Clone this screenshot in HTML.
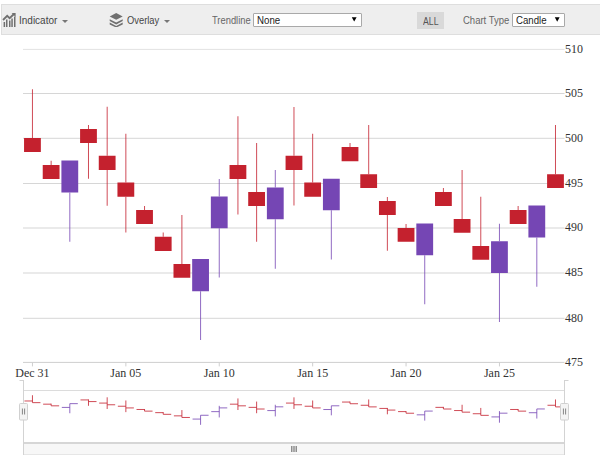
<!DOCTYPE html>
<html><head><meta charset="utf-8"><style>
html,body{margin:0;padding:0;background:#fff;width:600px;height:462px;overflow:hidden;position:relative}
*{box-sizing:border-box}
#tb{position:absolute;left:1px;top:4px;width:620px;height:31px;background:#eeeeee;border:1px solid #dedede;border-right:none}
.t{position:absolute;font-family:"Liberation Sans",sans-serif;font-size:10px;line-height:10px;white-space:nowrap}
.caret{position:absolute;width:0;height:0;border-left:3px solid transparent;border-right:3px solid transparent;border-top:3.3px solid #777}
.sel{position:absolute;background:#fff;border:1px solid #a9a9a9;border-radius:1px}
.arr{position:absolute;width:0;height:0;border-left:2.5px solid transparent;border-right:2.5px solid transparent;border-top:4.6px solid #000}
svg text{font-family:"Liberation Serif",serif;font-size:12px;fill:#333}
.xl{text-anchor:middle}
.yl{font-size:13px}
</style></head><body>
<div id="tb"></div>
<svg width="16" height="16" viewBox="0 0 16 16" style="position:absolute;left:1px;top:11px">
<g fill="#707070">
<rect x="2.6" y="11" width="1.5" height="5.5"/>
<rect x="5" y="8.5" width="1.5" height="8"/>
<rect x="8" y="9.5" width="1.5" height="7"/>
<rect x="10.3" y="7.5" width="1.5" height="9"/>
<rect x="13" y="5.5" width="1.5" height="11"/>
</g>
<polyline points="2,9 6.2,4.8 8.6,7.2 13,3" fill="none" stroke="#707070" stroke-width="1.8"/>
<polygon points="10.6,2 14.6,2 14.6,6" fill="#707070"/>
</svg>
<div class="t" style="left:19px;top:16px;color:#454545">Indicator</div>
<div class="caret" style="left:62px;top:20px"></div>
<svg width="16" height="16" viewBox="0 0 16 16" style="position:absolute;left:107px;top:11px">
<g fill="#707070">
<polygon points="2.7,5.5 9.2,2 15.7,5.5 9.2,8.7"/>
<polygon points="2.7,8.3 9.2,11.6 15.7,8.3 15.7,10.1 9.2,13.4 2.7,10.1"/>
<polygon points="2.7,11.6 9.2,15 15.7,11.6 15.7,13.4 9.2,16.6 2.7,13.4"/>
</g>
</svg>
<div class="t" style="left:127px;top:16px;color:#454545;transform:scaleX(0.935);transform-origin:0 0">Overlay</div>
<div class="caret" style="left:164px;top:20px"></div>
<div class="t" style="left:211.5px;top:16px;color:#666;transform:scaleX(0.935);transform-origin:0 0">Trendline</div>
<div class="sel" style="left:253px;top:13px;width:109px;height:14px"></div>
<div class="t" style="left:257.3px;top:16px;color:#222;transform:scaleX(0.97);transform-origin:0 0">None</div>
<svg width="8" height="8" style="position:absolute;left:351px;top:16px"><polygon points="0.8,1.2 5.6,1.2 3.2,5.6" fill="#000"/></svg>
<div style="position:absolute;left:417px;top:12px;width:27px;height:17px;background:#d9d9d9"></div>
<div class="t" style="left:423px;top:16.5px;color:#555;transform:scaleX(0.87);transform-origin:0 0">ALL</div>
<div class="t" style="left:463px;top:16px;color:#666;transform:scaleX(0.95);transform-origin:0 0">Chart Type</div>
<div class="sel" style="left:512px;top:13px;width:53px;height:14px"></div>
<div class="t" style="left:516px;top:16px;color:#222;transform:scaleX(0.965);transform-origin:0 0">Candle</div>
<svg width="8" height="8" style="position:absolute;left:554px;top:16px"><polygon points="0.8,1.3 5.6,1.3 3.2,5.8" fill="#000"/></svg>
<svg width="600" height="462" style="position:absolute;left:0;top:0">
<rect x="23" y="48.9" width="541.5" height="1" fill="#e3e3e3"/><rect x="23" y="93" width="541.5" height="1" fill="#d6d6d6"/><rect x="23" y="137.8" width="541.5" height="1" fill="#d6d6d6"/><rect x="23" y="183" width="541.5" height="1" fill="#d6d6d6"/><rect x="23" y="227.5" width="541.5" height="1" fill="#d6d6d6"/><rect x="23" y="272.5" width="541.5" height="1" fill="#d6d6d6"/><rect x="23" y="317.8" width="541.5" height="1" fill="#d6d6d6"/><rect x="23" y="361.9" width="541.5" height="1" fill="#cfcfcf"/><text transform="translate(565 52.7) scale(0.92 1)" class="yl">510</text><text transform="translate(565 96.8) scale(0.92 1)" class="yl">505</text><text transform="translate(565 141.6) scale(0.92 1)" class="yl">500</text><text transform="translate(565 186.8) scale(0.92 1)" class="yl">495</text><text transform="translate(565 231.3) scale(0.92 1)" class="yl">490</text><text transform="translate(565 276.3) scale(0.92 1)" class="yl">485</text><text transform="translate(565 321.6) scale(0.92 1)" class="yl">480</text><text transform="translate(565 365.7) scale(0.92 1)" class="yl">475</text><rect x="31.95" y="362.4" width="1" height="4" fill="#cfcfcf"/><text x="32.45" y="377" class="xl">Dec 31</text><rect x="125.35" y="362.4" width="1" height="4" fill="#cfcfcf"/><text x="125.85" y="377" class="xl">Jan 05</text><rect x="218.75" y="362.4" width="1" height="4" fill="#cfcfcf"/><text x="219.25" y="377" class="xl">Jan 10</text><rect x="312.15" y="362.4" width="1" height="4" fill="#cfcfcf"/><text x="312.65" y="377" class="xl">Jan 15</text><rect x="405.55" y="362.4" width="1" height="4" fill="#cfcfcf"/><text x="406.05" y="377" class="xl">Jan 20</text><rect x="498.95" y="362.4" width="1" height="4" fill="#cfcfcf"/><text x="499.45" y="377" class="xl">Jan 25</text><rect x="31.95" y="89.25" width="1" height="48.75" fill="#c4212e" fill-opacity="0.8"/><rect x="24.05" y="138" width="16.8" height="14" fill="#c4212e"/><rect x="50.63" y="160.75" width="1" height="4.25" fill="#c4212e" fill-opacity="0.8"/><rect x="42.73" y="165" width="16.8" height="14" fill="#c4212e"/><rect x="69.31" y="192.5" width="1" height="49.25" fill="#7546b4" fill-opacity="0.8"/><rect x="61.41" y="160.5" width="16.8" height="32" fill="#7546b4"/><rect x="87.99" y="125" width="1" height="4" fill="#c4212e" fill-opacity="0.8"/><rect x="87.99" y="143" width="1" height="35.75" fill="#c4212e" fill-opacity="0.8"/><rect x="80.09" y="129" width="16.8" height="14" fill="#c4212e"/><rect x="106.67" y="106.75" width="1" height="49" fill="#c4212e" fill-opacity="0.8"/><rect x="106.67" y="170" width="1" height="35.75" fill="#c4212e" fill-opacity="0.8"/><rect x="98.77" y="155.75" width="16.8" height="14.25" fill="#c4212e"/><rect x="125.35" y="133.75" width="1" height="48.75" fill="#c4212e" fill-opacity="0.8"/><rect x="125.35" y="196.75" width="1" height="35.75" fill="#c4212e" fill-opacity="0.8"/><rect x="117.45" y="182.5" width="16.8" height="14.25" fill="#c4212e"/><rect x="144.03" y="206" width="1" height="4" fill="#c4212e" fill-opacity="0.8"/><rect x="136.13" y="210" width="16.8" height="14" fill="#c4212e"/><rect x="162.71" y="232.5" width="1" height="4.25" fill="#c4212e" fill-opacity="0.8"/><rect x="154.81" y="236.75" width="16.8" height="14.25" fill="#c4212e"/><rect x="181.39" y="215" width="1" height="49" fill="#c4212e" fill-opacity="0.8"/><rect x="173.49" y="264" width="16.8" height="13.75" fill="#c4212e"/><rect x="200.07" y="291.25" width="1" height="48.75" fill="#7546b4" fill-opacity="0.8"/><rect x="192.17" y="259" width="16.8" height="32.25" fill="#7546b4"/><rect x="218.75" y="179" width="1" height="17.5" fill="#7546b4" fill-opacity="0.8"/><rect x="218.75" y="228.25" width="1" height="49.25" fill="#7546b4" fill-opacity="0.8"/><rect x="210.85" y="196.5" width="16.8" height="31.75" fill="#7546b4"/><rect x="237.43" y="116.25" width="1" height="48.75" fill="#c4212e" fill-opacity="0.8"/><rect x="237.43" y="179" width="1" height="35.5" fill="#c4212e" fill-opacity="0.8"/><rect x="229.53" y="165" width="16.8" height="14" fill="#c4212e"/><rect x="256.11" y="143" width="1" height="49" fill="#c4212e" fill-opacity="0.8"/><rect x="256.11" y="206" width="1" height="35.75" fill="#c4212e" fill-opacity="0.8"/><rect x="248.21" y="192" width="16.8" height="14" fill="#c4212e"/><rect x="274.79" y="170" width="1" height="17.5" fill="#7546b4" fill-opacity="0.8"/><rect x="274.79" y="219.25" width="1" height="49.5" fill="#7546b4" fill-opacity="0.8"/><rect x="266.89" y="187.5" width="16.8" height="31.75" fill="#7546b4"/><rect x="293.47" y="107" width="1" height="48.75" fill="#c4212e" fill-opacity="0.8"/><rect x="293.47" y="170" width="1" height="35.5" fill="#c4212e" fill-opacity="0.8"/><rect x="285.57" y="155.75" width="16.8" height="14.25" fill="#c4212e"/><rect x="312.15" y="133.75" width="1" height="48.75" fill="#c4212e" fill-opacity="0.8"/><rect x="304.25" y="182.5" width="16.8" height="14.25" fill="#c4212e"/><rect x="330.83" y="210.25" width="1" height="49.25" fill="#7546b4" fill-opacity="0.8"/><rect x="322.93" y="178.75" width="16.8" height="31.5" fill="#7546b4"/><rect x="349.51" y="143" width="1" height="4" fill="#c4212e" fill-opacity="0.8"/><rect x="341.61" y="147" width="16.8" height="14.25" fill="#c4212e"/><rect x="368.19" y="125" width="1" height="49.25" fill="#c4212e" fill-opacity="0.8"/><rect x="360.29" y="174.25" width="16.8" height="13.75" fill="#c4212e"/><rect x="386.87" y="197" width="1" height="4" fill="#c4212e" fill-opacity="0.8"/><rect x="386.87" y="215" width="1" height="35.75" fill="#c4212e" fill-opacity="0.8"/><rect x="378.97" y="201" width="16.8" height="14" fill="#c4212e"/><rect x="405.55" y="224" width="1" height="4" fill="#c4212e" fill-opacity="0.8"/><rect x="397.65" y="228" width="16.8" height="13.75" fill="#c4212e"/><rect x="424.23" y="255.25" width="1" height="49" fill="#7546b4" fill-opacity="0.8"/><rect x="416.33" y="223.5" width="16.8" height="31.75" fill="#7546b4"/><rect x="442.91" y="188" width="1" height="4" fill="#c4212e" fill-opacity="0.8"/><rect x="435.01" y="192" width="16.8" height="14" fill="#c4212e"/><rect x="461.59" y="170" width="1" height="49" fill="#c4212e" fill-opacity="0.8"/><rect x="453.69" y="219" width="16.8" height="13.75" fill="#c4212e"/><rect x="480.27" y="196.75" width="1" height="49.25" fill="#c4212e" fill-opacity="0.8"/><rect x="472.37" y="246" width="16.8" height="13.75" fill="#c4212e"/><rect x="498.95" y="223.75" width="1" height="17.5" fill="#7546b4" fill-opacity="0.8"/><rect x="498.95" y="273" width="1" height="49" fill="#7546b4" fill-opacity="0.8"/><rect x="491.05" y="241.25" width="16.8" height="31.75" fill="#7546b4"/><rect x="517.63" y="206" width="1" height="4" fill="#c4212e" fill-opacity="0.8"/><rect x="509.73" y="210" width="16.8" height="14" fill="#c4212e"/><rect x="536.31" y="237.5" width="1" height="49.25" fill="#7546b4" fill-opacity="0.8"/><rect x="528.41" y="205.5" width="16.8" height="32" fill="#7546b4"/><rect x="554.99" y="125" width="1" height="49.25" fill="#c4212e" fill-opacity="0.8"/><rect x="547.09" y="174.25" width="16.8" height="13.75" fill="#c4212e"/>
<rect x="23" y="380" width="1" height="75" fill="#d3d3d3"/><rect x="564" y="380" width="1" height="75" fill="#d3d3d3"/><rect x="19.5" y="380" width="4" height="1" fill="#d3d3d3"/><rect x="564" y="380" width="4.5" height="1" fill="#d3d3d3"/><rect x="24" y="390" width="540" height="1" fill="#dcdcdc"/><rect x="24" y="444" width="540" height="10" fill="#f7f7f7"/><rect x="24" y="442" width="540" height="2" fill="#d6d6d6"/><rect x="24" y="454" width="540" height="1" fill="#e6e6e6"/><rect x="291" y="446" width="6" height="6" fill="#c4c4c4"/><rect x="291" y="446" width="1" height="6" fill="#8f8f8f"/><rect x="293.5" y="446" width="1" height="6" fill="#8f8f8f"/><rect x="296" y="446" width="1" height="6" fill="#8f8f8f"/><rect x="31.95" y="395.23" width="1" height="7.4" fill="#c4212e" fill-opacity="0.8"/><rect x="24.45" y="400.48" width="8" height="1" fill="#c4212e" fill-opacity="0.8"/><rect x="32.45" y="402.14" width="8" height="1" fill="#c4212e" fill-opacity="0.8"/><rect x="50.63" y="403.67" width="1" height="2.15" fill="#c4212e" fill-opacity="0.8"/><rect x="43.13" y="403.67" width="8" height="1" fill="#c4212e" fill-opacity="0.8"/><rect x="51.13" y="405.32" width="8" height="1" fill="#c4212e" fill-opacity="0.8"/><rect x="69.31" y="403.64" width="1" height="9.59" fill="#7546b4" fill-opacity="0.8"/><rect x="61.81" y="406.91" width="8" height="1" fill="#7546b4" fill-opacity="0.8"/><rect x="69.81" y="403.14" width="8" height="1" fill="#7546b4" fill-opacity="0.8"/><rect x="87.99" y="399.45" width="1" height="6.34" fill="#c4212e" fill-opacity="0.8"/><rect x="80.49" y="399.42" width="8" height="1" fill="#c4212e" fill-opacity="0.8"/><rect x="88.49" y="401.07" width="8" height="1" fill="#c4212e" fill-opacity="0.8"/><rect x="106.67" y="397.3" width="1" height="11.68" fill="#c4212e" fill-opacity="0.8"/><rect x="99.17" y="402.58" width="8" height="1" fill="#c4212e" fill-opacity="0.8"/><rect x="107.17" y="404.26" width="8" height="1" fill="#c4212e" fill-opacity="0.8"/><rect x="125.35" y="400.48" width="1" height="11.65" fill="#c4212e" fill-opacity="0.8"/><rect x="117.85" y="405.74" width="8" height="1" fill="#c4212e" fill-opacity="0.8"/><rect x="125.85" y="407.42" width="8" height="1" fill="#c4212e" fill-opacity="0.8"/><rect x="144.03" y="409.01" width="1" height="2.12" fill="#c4212e" fill-opacity="0.8"/><rect x="136.53" y="408.98" width="8" height="1" fill="#c4212e" fill-opacity="0.8"/><rect x="144.53" y="410.63" width="8" height="1" fill="#c4212e" fill-opacity="0.8"/><rect x="162.71" y="412.13" width="1" height="2.18" fill="#c4212e" fill-opacity="0.8"/><rect x="155.21" y="412.14" width="8" height="1" fill="#c4212e" fill-opacity="0.8"/><rect x="163.21" y="413.82" width="8" height="1" fill="#c4212e" fill-opacity="0.8"/><rect x="181.39" y="410.07" width="1" height="7.4" fill="#c4212e" fill-opacity="0.8"/><rect x="173.89" y="415.35" width="8" height="1" fill="#c4212e" fill-opacity="0.8"/><rect x="181.89" y="416.97" width="8" height="1" fill="#c4212e" fill-opacity="0.8"/><rect x="200.07" y="415.26" width="1" height="9.56" fill="#7546b4" fill-opacity="0.8"/><rect x="192.57" y="418.57" width="8" height="1" fill="#7546b4" fill-opacity="0.8"/><rect x="200.57" y="414.76" width="8" height="1" fill="#7546b4" fill-opacity="0.8"/><rect x="218.75" y="405.82" width="1" height="11.62" fill="#7546b4" fill-opacity="0.8"/><rect x="211.25" y="411.13" width="8" height="1" fill="#7546b4" fill-opacity="0.8"/><rect x="219.25" y="407.39" width="8" height="1" fill="#7546b4" fill-opacity="0.8"/><rect x="237.43" y="398.42" width="1" height="11.59" fill="#c4212e" fill-opacity="0.8"/><rect x="229.93" y="403.67" width="8" height="1" fill="#c4212e" fill-opacity="0.8"/><rect x="237.93" y="405.32" width="8" height="1" fill="#c4212e" fill-opacity="0.8"/><rect x="256.11" y="401.57" width="1" height="11.65" fill="#c4212e" fill-opacity="0.8"/><rect x="248.61" y="406.86" width="8" height="1" fill="#c4212e" fill-opacity="0.8"/><rect x="256.61" y="408.51" width="8" height="1" fill="#c4212e" fill-opacity="0.8"/><rect x="274.79" y="404.76" width="1" height="11.65" fill="#7546b4" fill-opacity="0.8"/><rect x="267.29" y="410.07" width="8" height="1" fill="#7546b4" fill-opacity="0.8"/><rect x="275.29" y="406.32" width="8" height="1" fill="#7546b4" fill-opacity="0.8"/><rect x="293.47" y="397.33" width="1" height="11.62" fill="#c4212e" fill-opacity="0.8"/><rect x="285.97" y="402.58" width="8" height="1" fill="#c4212e" fill-opacity="0.8"/><rect x="293.97" y="404.26" width="8" height="1" fill="#c4212e" fill-opacity="0.8"/><rect x="312.15" y="400.48" width="1" height="7.43" fill="#c4212e" fill-opacity="0.8"/><rect x="304.65" y="405.74" width="8" height="1" fill="#c4212e" fill-opacity="0.8"/><rect x="312.65" y="407.42" width="8" height="1" fill="#c4212e" fill-opacity="0.8"/><rect x="330.83" y="405.79" width="1" height="9.53" fill="#7546b4" fill-opacity="0.8"/><rect x="323.33" y="409.01" width="8" height="1" fill="#7546b4" fill-opacity="0.8"/><rect x="331.33" y="405.29" width="8" height="1" fill="#7546b4" fill-opacity="0.8"/><rect x="349.51" y="401.57" width="1" height="2.15" fill="#c4212e" fill-opacity="0.8"/><rect x="342.01" y="401.55" width="8" height="1" fill="#c4212e" fill-opacity="0.8"/><rect x="350.01" y="403.23" width="8" height="1" fill="#c4212e" fill-opacity="0.8"/><rect x="368.19" y="399.45" width="1" height="7.43" fill="#c4212e" fill-opacity="0.8"/><rect x="360.69" y="404.76" width="8" height="1" fill="#c4212e" fill-opacity="0.8"/><rect x="368.69" y="406.38" width="8" height="1" fill="#c4212e" fill-opacity="0.8"/><rect x="386.87" y="407.95" width="1" height="6.34" fill="#c4212e" fill-opacity="0.8"/><rect x="379.37" y="407.92" width="8" height="1" fill="#c4212e" fill-opacity="0.8"/><rect x="387.37" y="409.57" width="8" height="1" fill="#c4212e" fill-opacity="0.8"/><rect x="405.55" y="411.13" width="1" height="2.09" fill="#c4212e" fill-opacity="0.8"/><rect x="398.05" y="411.1" width="8" height="1" fill="#c4212e" fill-opacity="0.8"/><rect x="406.05" y="412.73" width="8" height="1" fill="#c4212e" fill-opacity="0.8"/><rect x="424.23" y="411.07" width="1" height="9.53" fill="#7546b4" fill-opacity="0.8"/><rect x="416.73" y="414.32" width="8" height="1" fill="#7546b4" fill-opacity="0.8"/><rect x="424.73" y="410.57" width="8" height="1" fill="#7546b4" fill-opacity="0.8"/><rect x="442.91" y="406.88" width="1" height="2.12" fill="#c4212e" fill-opacity="0.8"/><rect x="435.41" y="406.86" width="8" height="1" fill="#c4212e" fill-opacity="0.8"/><rect x="443.41" y="408.51" width="8" height="1" fill="#c4212e" fill-opacity="0.8"/><rect x="461.59" y="404.76" width="1" height="7.4" fill="#c4212e" fill-opacity="0.8"/><rect x="454.09" y="410.04" width="8" height="1" fill="#c4212e" fill-opacity="0.8"/><rect x="462.09" y="411.66" width="8" height="1" fill="#c4212e" fill-opacity="0.8"/><rect x="480.27" y="407.92" width="1" height="7.43" fill="#c4212e" fill-opacity="0.8"/><rect x="472.77" y="413.23" width="8" height="1" fill="#c4212e" fill-opacity="0.8"/><rect x="480.77" y="414.85" width="8" height="1" fill="#c4212e" fill-opacity="0.8"/><rect x="498.95" y="411.1" width="1" height="11.59" fill="#7546b4" fill-opacity="0.8"/><rect x="491.45" y="416.41" width="8" height="1" fill="#7546b4" fill-opacity="0.8"/><rect x="499.45" y="412.67" width="8" height="1" fill="#7546b4" fill-opacity="0.8"/><rect x="517.63" y="409.01" width="1" height="2.12" fill="#c4212e" fill-opacity="0.8"/><rect x="510.13" y="408.98" width="8" height="1" fill="#c4212e" fill-opacity="0.8"/><rect x="518.13" y="410.63" width="8" height="1" fill="#c4212e" fill-opacity="0.8"/><rect x="536.31" y="408.95" width="1" height="9.59" fill="#7546b4" fill-opacity="0.8"/><rect x="528.81" y="412.22" width="8" height="1" fill="#7546b4" fill-opacity="0.8"/><rect x="536.81" y="408.45" width="8" height="1" fill="#7546b4" fill-opacity="0.8"/><rect x="554.99" y="399.45" width="1" height="7.43" fill="#c4212e" fill-opacity="0.8"/><rect x="547.49" y="404.76" width="8" height="1" fill="#c4212e" fill-opacity="0.8"/><rect x="555.49" y="406.38" width="8" height="1" fill="#c4212e" fill-opacity="0.8"/><rect x="19.5" y="403.5" width="8" height="16.5" rx="1" fill="#f4f4f4" stroke="#d0d0d0" stroke-width="1"/><rect x="21.9" y="408.5" width="1" height="6" fill="#858585"/><rect x="24.1" y="408.5" width="1" height="6" fill="#858585"/><rect x="560.5" y="403.5" width="8" height="16.5" rx="1" fill="#f4f4f4" stroke="#d0d0d0" stroke-width="1"/><rect x="562.9" y="408.5" width="1" height="6" fill="#858585"/><rect x="565.1" y="408.5" width="1" height="6" fill="#858585"/>
</svg>
</body></html>
